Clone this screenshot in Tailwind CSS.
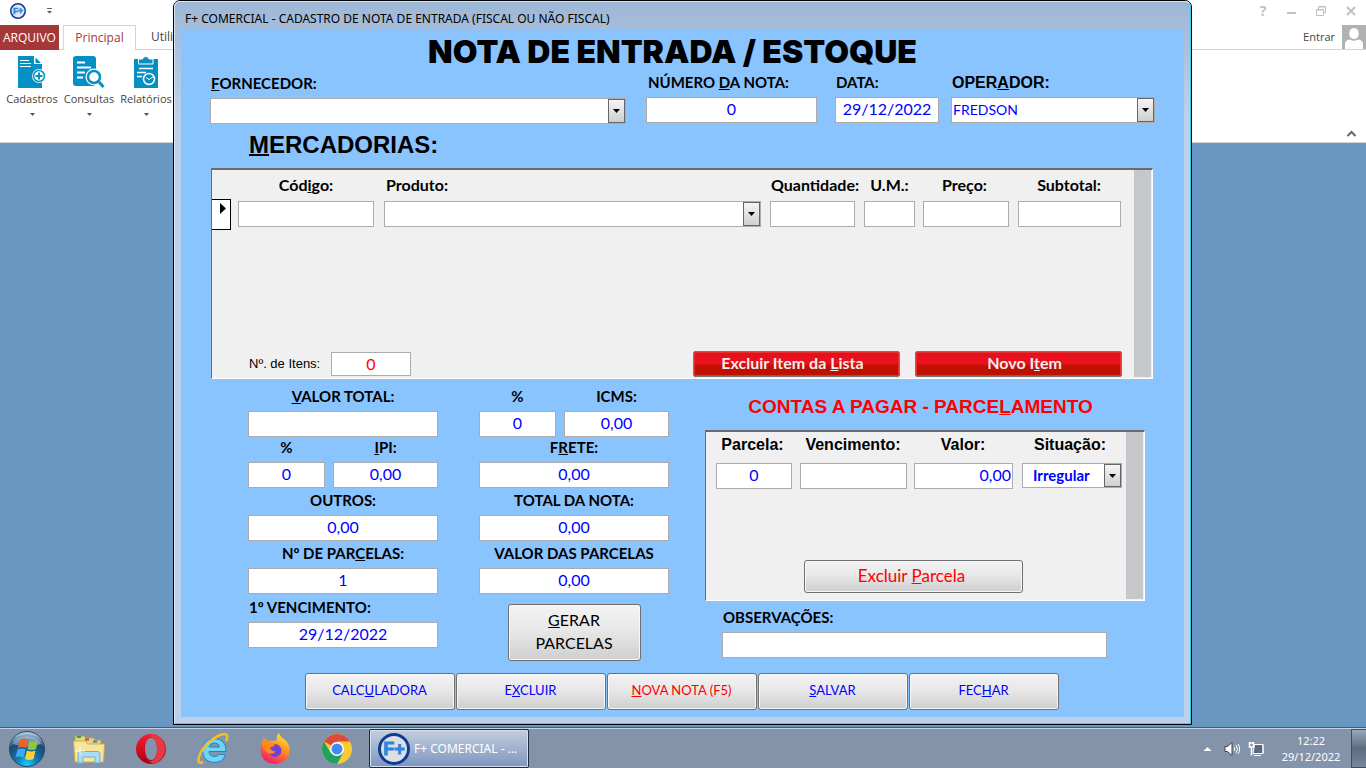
<!DOCTYPE html>
<html lang="pt-BR">
<head>
<meta charset="utf-8">
<title>F+ Comercial</title>
<script src="https://cdn.jsdelivr.net/npm/@tailwindcss/browser@4"></script>
</head>
<body class="relative flex h-screen flex-col overflow-hidden bg-[#6897c2] font-['Open_Sans',sans-serif] text-[12px] text-[#444]">

<!-- Ribbon -->
<header class="h-[143px] shrink-0 border-b border-[#d4d4d4] bg-white">
  <div class="flex h-[25px] items-center justify-between pl-[10px] pr-[10px] pb-[3px]">
    <div class="flex items-center gap-5">
      <svg class="size-4" viewBox="0 0 32 32"><circle cx="16" cy="16" r="14.500" fill="#dde6f2" stroke="#0d3c94" stroke-width="3"/><text x="16" y="22" text-anchor="middle" font-family="Liberation Sans" font-weight="bold" font-size="17" fill="#2f86dd" stroke="#2f86dd">F+</text></svg>
      <svg class="h-2 w-[7px]" viewBox="0 0 7 8"><path d="M1 1.500h5" stroke="#666"/><path d="M1 4h5L3.500 6.500z" fill="#555"/></svg>
    </div>
    <div class="flex items-center gap-[20px] text-[#c0c1c6]">
      <button class="h-5 w-2 text-[14px] leading-5 font-bold" aria-label="Ajuda">?</button>
      <button aria-label="Minimizar"><svg class="h-3 w-[9px]" viewBox="0 0 9 12"><path d="M0 8h9" stroke="currentColor" stroke-width="2"/></svg></button>
      <button aria-label="Restaurar"><svg class="h-3 w-[10px]" viewBox="0 0 10 12" fill="none" stroke="currentColor"><path d="M2.500 4V1.500h7v6H7.500M2 2h8M.5 4.500h7v6h-7zM0 5h8"/></svg></button>
      <button aria-label="Fechar"><svg class="h-3 w-[10px]" viewBox="0 0 10 12"><path d="M1 2l8 8M9 2l-8 8" stroke="currentColor" stroke-width="2"/></svg></button>
    </div>
  </div>
  <div class="flex h-[25px] items-end">
    <button class="h-full w-[59px] bg-[#a4373a] text-white">ARQUIVO</button>
    <span class="w-1 border-b border-[#d4d4d4]"></span>
    <button class="h-full w-[73px] border border-b-0 border-[#d4d4d4] text-[#a4373a]">Principal</button>
    <div class="flex h-full flex-1 items-center justify-between border-b border-[#d4d4d4] pl-[15px]">
      <button>Utilitários</button>
      <div class="flex items-center gap-[7px]"><a href="#" class="text-[11px]">Entrar</a>
      <svg class="h-6 w-6" viewBox="0 0 24 24"><path fill="#b1b1b1" d="M0 0h24v24H0z"/><ellipse cx="12" cy="8.500" rx="4.800" ry="5.500" fill="#fff"/><path d="M3 24v-5q0-4 5-4.500 4 2.500 8 0 5 .5 5 4.500v5z" fill="#fff"/></svg></div>
    </div>
  </div>
  <div class="flex h-[92px] justify-between pl-1 pr-[10px]">
    <div class="flex gap-px text-[11px]">
      <button class="flex w-14 flex-col items-center pt-[6px]">
        <svg class="h-8 w-[28px]" viewBox="0 0 28 32"><path d="M0 0h16v8h8v24H0z" fill="#0490c4"/><path d="M17.500 1.500L23 7h-5.500z" fill="#0490c4"/><path d="M2 4.500h9M2 7.500h11M2 10.500h11" stroke="#fff"/><circle cx="21" cy="20" r="7" fill="#fff"/><circle cx="21" cy="20" r="5.500" fill="#fff" stroke="#0490c4" stroke-width="1.500"/><path d="M17.500 20h7M21 16.500v7" stroke="#0490c4" stroke-width="2"/></svg>
        <span class="mt-[2px] leading-[18px]">Cadastros</span>
        <svg class="mt-[5px] h-[3px] w-[5px]" viewBox="0 0 5 3"><path d="M0 0h5L2.500 3z" fill="#555"/></svg>
      </button>
      <button class="flex w-14 flex-col items-center pt-[6px]">
        <svg class="h-8 w-8" viewBox="0 0 32 32"><rect width="23" height="30" rx="3" fill="#0490c4"/><path d="M4 6.500h8M4 11.500h14M4 16.500h8M4 21.500h6" stroke="#fff" stroke-width="2"/><circle cx="21" cy="21" r="8.500" fill="#fff"/><circle cx="21" cy="21" r="6" fill="#fff" stroke="#0490c4" stroke-width="2.500"/><path d="M26 26l4.500 5" stroke="#0490c4" stroke-width="3"/></svg>
        <span class="mt-[2px] leading-[18px]">Consultas</span>
        <svg class="mt-[5px] h-[3px] w-[5px]" viewBox="0 0 5 3"><path d="M0 0h5L2.500 3z" fill="#555"/></svg>
      </button>
      <button class="flex w-14 flex-col items-center pt-[6px]">
        <svg class="h-8 w-6" viewBox="0 0 24 32"><path d="M0 3h24v29H0z" fill="#0490c4"/><path d="M4.500 3v5h14.500V3h-4a3.300 3 0 0 0-6.500 0z" fill="#0490c4" stroke="#fff"/><path d="M5 12.500h14M3 16.500h9M3 20.500h5" stroke="#fff" stroke-width="1.500"/><circle cx="15" cy="23" r="5.500" fill="#0490c4" stroke="#fff" stroke-width="1.500"/><path d="M12 21.500l3 2 4-2.500" fill="none" stroke="#fff"/></svg>
        <span class="mt-[2px] leading-[18px]">Relatórios</span>
        <svg class="mt-[5px] h-[3px] w-[5px]" viewBox="0 0 5 3"><path d="M0 0h5L2.500 3z" fill="#555"/></svg>
      </button>
    </div>
    <button class="self-end pb-[5px]" aria-label="Recolher a faixa de opções"><svg class="h-[7px] w-[9px]" viewBox="0 0 9 7"><path d="M.5 6l4-4 4 4" fill="none" stroke="#666" stroke-width="2"/></svg></button>
  </div>
</header>

<!-- Application window -->
<main class="absolute top-0 right-[174px] left-[173px] rounded-t-[7px] border border-black bg-[#bdd0e9] font-['Lato','Noto_Sans',sans-serif] text-black">
  <div class="rounded-t-[6px] border border-[#d8e6f5] border-r-[#35d0ee] border-b-[#35d0ee] bg-linear-to-b from-[#9db7d6] to-[#bdd0e9] to-[110px] px-[6px] pb-[6px]">
    <h1 class="flex h-7 items-center pl-[4px] pt-[5px] font-['Noto_Sans',sans-serif] text-[12px] leading-4">F+ COMERCIAL - CADASTRO DE NOTA DE ENTRADA (FISCAL OU NÃO FISCAL)</h1>
    <form class="flex flex-col bg-[#8ac4ff] px-[29px] pb-[7px]" onsubmit="return false">
      <h2 class="h-[42px] pr-5 text-center font-['Inter',sans-serif] text-[32px] leading-[43px] font-black">NOTA DE ENTRADA / ESTOQUE</h2>

      <div class="flex items-end text-[15px]">
        <div class="flex-1 font-bold"><label for="forn" class="block pl-px leading-5"><u>F</u>ORNECEDOR:</label>
          <div class="relative mt-[5px] h-[26px]"><select id="forn" class="h-full w-full appearance-none border border-[#ababab] bg-white px-1"><option></option></select>
          <span class="pointer-events-none absolute inset-y-px right-px flex w-[17px] items-center justify-center border border-[#666] bg-linear-to-b from-[#f5f5f5] to-[#cfcfcf]"><svg class="h-1 w-[7px]" viewBox="0 0 7 4"><path d="M0 0h7L3.500 4z"/></svg></span></div></div>
        <div class="mb-px ml-5 w-[171px] font-bold"><label for="num" class="block pl-[2px] leading-5">NÚMERO <u>D</u>A NOTA:</label>
          <input id="num" value="0" class="mt-[5px] block h-[26px] w-full border border-[#ababab] bg-white pb-1 text-center text-[16px] font-normal text-[#00f]"></div>
        <div class="mb-px ml-[18px] w-[104px] font-bold"><label for="data" class="block pl-px leading-5">DATA:</label>
          <input id="data" value="29/12/2022" class="mt-[5px] block h-[26px] w-full border border-[#ababab] bg-white pb-1 text-center text-[16px] font-normal text-[#00f]"></div>
        <div class="mb-px ml-3 w-[204px]"><label for="oper" class="block pl-px font-['Liberation_Sans',sans-serif] text-[16px] leading-5 font-bold">OPER<u>A</u>DOR:</label>
          <div class="relative mt-1 h-[26px]"><select id="oper" class="h-full w-full appearance-none border border-[#ababab] bg-white pb-[2px] pl-px text-[14px] text-[#00f]"><option>FREDSON</option></select>
          <span class="pointer-events-none absolute inset-y-px right-px flex w-[17px] items-center justify-center border border-[#666] bg-linear-to-b from-[#f5f5f5] to-[#cfcfcf]"><svg class="h-1 w-[7px]" viewBox="0 0 7 4"><path d="M0 0h7L3.500 4z"/></svg></span></div></div>
      </div>

      <h3 class="h-11 pl-[39px] font-['Liberation_Sans',sans-serif] text-[24px] leading-[42px] font-bold"><u class="decoration-2">M</u>ERCADORIAS:</h3>

      <!-- Items list -->
      <section class="mr-[2px] ml-px flex h-[211px] border border-t-2 border-t-[#6b6b6b] border-r-white border-b-white border-l-[#6b6b6b] bg-[#f0f0f0]">
        <div class="flex min-w-0 flex-1 flex-col justify-between">
          <table class="w-full table-fixed text-[16px]">
            <colgroup><col class="w-[26px]"><col class="w-[146px]"><col><col class="w-[94px]"><col class="w-[59px]"><col class="w-[95px]"><col class="w-[116px]"></colgroup>
            <thead><tr class="h-7 font-bold"><td></td><th class="pt-[2px] pr-[10px]"><label for="cod">Cód<u>i</u>go:</label></th><th class="pt-[2px] pl-[2px] text-left"><label for="prod">Produto:</label></th><th class="pt-[2px] pr-1 whitespace-nowrap"><label for="qtd">Quantidade:</label></th><th class="pt-[2px] pr-2"><label for="um">U.M.:</label></th><th class="pt-[2px] pr-3"><label for="preco">Preço:</label></th><th class="pt-[2px] pr-[14px]"><label for="sub">Subtotal:</label></th></tr></thead>
            <tbody><tr class="h-8">
              <td><div class="flex h-[31px] w-[19px] justify-end border border-l-0 border-black bg-white pt-[3px] pr-1"><svg class="h-[11px] w-[6px]" viewBox="0 0 6 11"><path d="M0 0v11l6-5.500z"/></svg></div></td>
              <td class="pr-[10px]"><input id="cod" class="block h-[26px] w-full border border-[#ababb0] bg-white"></td>
              <td class="pr-[9px]"><div class="relative h-[26px]"><select id="prod" class="h-full w-full appearance-none border border-[#ababb0] bg-white px-1"><option></option></select><span class="pointer-events-none absolute inset-y-px right-px flex w-[17px] items-center justify-center border border-[#666] bg-linear-to-b from-[#f5f5f5] to-[#cfcfcf]"><svg class="h-1 w-[7px]" viewBox="0 0 7 4"><path d="M0 0h7L3.500 4z"/></svg></span></div></td>
              <td class="pr-[9px]"><input id="qtd" class="block h-[26px] w-full border border-[#ababb0] bg-white"></td>
              <td class="pr-2"><input id="um" class="block h-[26px] w-full border border-[#ababb0] bg-white"></td>
              <td class="pr-[9px]"><input id="preco" class="block h-[26px] w-full border border-[#ababb0] bg-white"></td>
              <td class="pr-[13px]"><input id="sub" class="block h-[26px] w-full border border-[#ababb0] bg-white"></td>
            </tr></tbody>
          </table>
          <div class="flex items-center pr-3 pb-px pl-[37px]">
            <label for="itens" class="w-[82px] font-['Liberation_Sans',sans-serif] text-[13px]">Nº. de Itens:</label>
            <input id="itens" value="0" class="h-[24px] w-20 border border-[#ababb0] bg-white text-center text-[16px] text-[#f00]">
            <button class="ml-auto h-[26px] w-[207px] rounded-[2px] border border-[#777] bg-linear-to-b from-[#e0101c] from-0% via-[#f01020] via-45% to-[#c01000] to-60% pr-2 pb-[2px] text-[16px] leading-5 font-bold text-[#eee] inset-ring inset-ring-[#e83030]">Excluir Item da <u>L</u>ista</button>
            <button class="ml-[15px] h-[26px] w-[207px] rounded-[2px] border border-[#777] bg-linear-to-b from-[#e0101c] from-0% via-[#f01020] via-45% to-[#c01000] to-60% pl-3 pb-[2px] text-[16px] leading-5 font-bold text-[#eee] inset-ring inset-ring-[#e83030]">Novo I<u>t</u>em</button>
          </div>
        </div>
        <div class="mr-px mb-px w-[17px] bg-[#c6c7ca]"></div>
      </section>

      <div class="mt-[7px] flex pl-[38px] pr-[10px]">
        <!-- Totals -->
        <div class="grid grid-cols-[190px_190px] grid-rows-[51px_51px_53px_53px_67px] gap-x-[41px] text-center text-[15px] font-bold [&_input]:block [&_input]:h-[26px] [&_input]:w-full [&_input]:border [&_input]:border-[#ababab] [&_input]:bg-white [&_input]:pb-1 [&_input]:text-center [&_input]:text-[16px] [&_input]:font-normal [&_input]:text-[#00f] [&_label]:mb-[5px] [&_label]:block [&_label]:leading-5">
          <div class="self-end"><label for="vt"><u>V</u>ALOR TOTAL:</label><input id="vt"></div>
          <div class="flex gap-2 self-end"><div class="w-[77px]"><label for="picms">%</label><input id="picms" value="0"></div><div class="flex-1"><label for="icms">ICMS:</label><input id="icms" value="0,00"></div></div>
          <div class="flex gap-2 self-end"><div class="w-[77px]"><label for="pipi">%</label><input id="pipi" value="0"></div><div class="flex-1"><label for="ipi"><u>I</u>PI:</label><input id="ipi" value="0,00"></div></div>
          <div class="self-end"><label for="frete">F<u>R</u>ETE:</label><input id="frete" value="0,00"></div>
          <div class="self-end"><label for="outros">OUTROS:</label><input id="outros" value="0,00"></div>
          <div class="self-end"><label for="tn">TOTAL DA NOTA:</label><input id="tn" value="0,00"></div>
          <div class="self-end"><label for="np">Nº DE PAR<u>C</u>ELAS:</label><input id="np" value="1"></div>
          <div class="self-end"><label for="vp">VALOR DAS PARCELAS</label><input id="vp" value="0,00"></div>
          <div class="pt-[3px]"><label for="venc1" class="pl-px text-left">1º VENCIMENTO:</label><input id="venc1" value="29/12/2022"></div>
          <button class="mx-auto h-[57px] w-[133px] self-end rounded-[3px] border border-[#707070] bg-linear-to-b from-[#f3f3f3] from-0% via-[#e8e8e8] via-45% to-[#cfcfcf] pb-1 text-[16px] leading-[23px] font-normal inset-ring inset-ring-[#f8f8f8]"><u>G</u>ERAR<br>PARCELAS</button>
        </div>

        <!-- Instalments -->
        <div class="ml-9 flex flex-1 flex-col">
          <h3 class="mb-[2px] pr-[9px] text-center font-['Liberation_Sans',sans-serif] text-[19px] leading-[42px] font-bold text-[#f00]">CONTAS A PAGAR - PARCE<u>L</u>AMENTO</h3>
          <section class="flex h-[171px] border border-t-2 border-t-[#6b6b6b] border-r-white border-b-white border-l-[#6b6b6b] bg-[#f0f0f0]">
            <div class="flex min-w-0 flex-1 flex-col justify-between">
              <table class="ml-[10px] table-fixed font-['Liberation_Sans',sans-serif] text-[16px]">
                <colgroup><col class="w-[84px]"><col class="w-[114px]"><col class="w-[108px]"><col class="w-[104px]"></colgroup>
                <thead><tr class="h-[31px] align-top leading-[26px]"><th class="pr-[11px]"><label for="parc">Parcela:</label></th><th class="pr-2"><label for="venc">Vencimento:</label></th><th class="pr-[10px]"><label for="val">Valor:</label></th><th class="pr-2"><label for="sit">Situação:</label></th></tr></thead>
                <tbody class="font-['Lato',sans-serif] text-[#00f]"><tr class="align-top">
                  <td class="pr-2"><input id="parc" value="0" class="block h-[26px] w-full border border-[#ababb0] bg-white pb-1 text-center"></td>
                  <td class="pr-[7px]"><input id="venc" class="block h-[26px] w-full border border-[#ababb0] bg-white"></td>
                  <td class="pr-[9px]"><input id="val" value="0,00" class="block h-[26px] w-full border border-[#ababb0] bg-white pr-px pb-1 text-right"></td>
                  <td class="pr-1"><div class="relative h-[25px]"><select id="sit" class="h-full w-full appearance-none border border-[#ababb0] bg-white pb-px pl-[10px] text-[15px] leading-5 font-bold"><option>Irregular</option></select><span class="pointer-events-none absolute inset-y-px right-px flex w-[17px] items-center justify-center border border-[#666] bg-linear-to-b from-[#f5f5f5] to-[#cfcfcf]"><svg class="h-1 w-[7px]" viewBox="0 0 7 4"><path d="M0 0h7L3.500 4z"/></svg></span></div></td>
                </tr></tbody>
              </table>
              <button class="mb-[7px] ml-[98px] h-[33px] w-[219px] rounded-[3px] border border-[#707070] bg-linear-to-b from-[#f3f3f3] from-0% via-[#e8e8e8] via-45% to-[#cfcfcf] pr-1 pb-[2px] text-[17px] text-[#f00] inset-ring inset-ring-[#f8f8f8]">Excluir <u>P</u>arcela</button>
            </div>
            <div class="mr-px mb-px w-[17px] bg-[#c6c7ca]"></div>
          </section>
          <label for="obs" class="mt-[6px] pl-[18px] text-[15px] leading-5 font-bold">OBSERVAÇÕES:</label>
          <input id="obs" class="mt-[5px] mr-[38px] ml-[17px] h-[26px] border border-[#ababab] bg-white px-1 text-[16px]">
        </div>
      </div>

      <div class="mt-3 mr-[2px] flex justify-center gap-px text-[13px] text-[#00f] [&_button]:h-[37px] [&_button]:w-[150px] [&_button]:rounded-[3px] [&_button]:border [&_button]:border-[#707070] [&_button]:bg-linear-to-b [&_button]:from-[#f3f3f3] [&_button]:via-[#e6e6e6] [&_button]:to-[#cfcfcf] [&_button]:pb-[2px] [&_button]:inset-ring [&_button]:inset-ring-[#f8f8f8]">
        <button>CALC<u>U</u>LADORA</button><button>E<u>X</u>CLUIR</button><button class="text-[#f00]"><u>N</u>OVA NOTA (F5)</button><button><u>S</u>ALVAR</button><button>FEC<u>H</u>AR</button>
      </div>
    </form>
  </div>
</main>

<!-- Taskbar -->
<footer class="mt-auto flex h-10 shrink-0 items-center border-t border-[#c3d4e8] bg-[#8394aa] pl-[9px] text-white shadow-[0_-1px_0_#4b5b70]">
  <button aria-label="Iniciar"><svg class="size-9" viewBox="0 0 36 36"><defs><radialGradient id="orb" cx=".5" cy=".95" r=".9"><stop offset="0" stop-color="#18d0ff"/><stop offset=".4" stop-color="#1070a8"/><stop offset=".75" stop-color="#1c4a74"/><stop offset="1" stop-color="#a8c8e0"/></radialGradient></defs><circle cx="18" cy="18" r="17.500" fill="url(#orb)" stroke="#2b4460"/><path d="M4 13a15 12 0 0 1 28 0q-14 5-28 0z" fill="#fff" opacity=".35"/><path d="M11 8.500q4-2 8 0l-2 8.500q-4-2-8 0z" fill="#f0602a"/><path d="M20.500 9.500q4 2 8.500 0l-2 8.500q-4 2-8.500 0z" fill="#8dc63f"/><path d="M8.500 18.500q4-2 8 0l-2 8q-4-2-8 0z" fill="#3fa9f5"/><path d="M18 19.500q4 2 8.500 0l-2 8.500q-4 2-8.500 0z" fill="#ffd23c"/></svg></button>
  <button class="ml-[27px]" aria-label="Explorador"><svg class="h-[30px] w-[34px]" viewBox="0 0 34 30"><path d="M3 2h9l2 2h8l1 2h6v6H3z" fill="#e8d28a" stroke="#b89c4c"/><path d="M5 3h4" stroke="#2fa83c" stroke-width="2"/><path d="M13 5.500h4" stroke="#d8402c" stroke-width="2"/><path d="M21 7.500h4" stroke="#2b84d0" stroke-width="2"/><path d="M1.500 7h12l2 3h17l-1 18H3z" fill="#f8e59c" stroke="#c9ad58"/><path d="M6 29v-9q0-2.500 2.500-2.500h17q2.500 0 2.500 2.500v9h-5v-6H11v6z" fill="#a9dcf2" stroke="#6db0d4"/><path d="M8 12v10M3 17h10" stroke="#fff" stroke-width=".8"/></svg></button>
  <button class="ml-[29px]" aria-label="Opera"><svg class="size-8" viewBox="0 0 32 32"><defs><linearGradient id="op" x2="0" y2="1"><stop stop-color="#ff1b2d"/><stop offset="1" stop-color="#a70014"/></linearGradient></defs><path fill-rule="evenodd" fill="url(#op)" d="M16 1a15 15 0 1 0 0 30 15 15 0 0 0 0-30zm0 4c4 0 6 5 6 11s-2 11-6 11-6-5-6-11 2-11 6-11z"/><path d="M19 1.500A15 15 0 0 1 19 30.500c-2 0-4-1-5-3 5 2 8-4 8-11.500S19 3 14 4q2-2.500 5-2.500z" fill="#e33a44"/></svg></button>
  <button class="ml-[30px]" aria-label="Internet Explorer"><svg class="size-8" viewBox="0 0 32 32"><path d="M29 18.500H12q.5 5 5.500 5 3 0 4.500-2h6.500q-2.500 8-11.500 8Q6 29 5.500 17.500 6 6 17 5.500 29.500 6 29 18.500zM12 14h10.500q-.5-4-5-4t-5.500 4z" fill="#6fd4f8" stroke="#1c86c8"/><path d="M6 29Q0 32 2 24 5 14 16 6 28-2 30 2.500q.5 3-1 5.500" fill="none" stroke="#f6bd27" stroke-width="2.600"/></svg></button>
  <button class="ml-[30px]" aria-label="Firefox"><svg class="size-8" viewBox="0 0 32 32"><defs><linearGradient id="ff" x1=".8" x2=".3" y2="1"><stop stop-color="#fff04a"/><stop offset=".4" stop-color="#ff9a20"/><stop offset="1" stop-color="#f5156c"/></linearGradient></defs><path d="M20 0q1 4 5 6 6 5 5.500 12-1 12-14.500 13Q2 30 1.500 17 1.500 11 4 8V4l4 3.500L14 8l4-1q-1-4 2-7z" fill="url(#ff)"/><circle cx="16" cy="17.500" r="6.500" fill="#7540d8"/><path d="M3 9l5-1 8 3q-1 3-5 3.500 1 4 6 4-4 4-9 1-5-4-5-10.500z" fill="#ff8a16"/></svg></button>
  <button class="ml-[30px]" aria-label="Chrome"><svg class="size-8" viewBox="0 0 32 32"><circle cx="16" cy="16" r="15" fill="#fbc934"/><path d="M16 16L3 8.500A15 15 0 0 1 29 8.500H16z" fill="#dd4b3e"/><path d="M3 8.500A15 15 0 0 0 16 31l6.500-11.500L16 16 9.500 19.700z" fill="#1da25f"/><circle cx="16" cy="16" r="7" fill="#fff"/><circle cx="16" cy="16" r="5.500" fill="#4688f1"/></svg></button>
  <button class="ml-4 flex h-[39px] w-[160px] items-center gap-1 rounded-[2px] border border-[#222b3a] bg-linear-to-b from-[#c3cedf] via-[#a0b2ce] to-[#7f95c0] pl-[8px] font-['Noto_Sans',sans-serif] text-[12px] whitespace-nowrap inset-ring inset-ring-[#d5dfee]">
    <svg class="size-8 shrink-0" viewBox="0 0 32 32"><circle cx="16" cy="16" r="14.500" fill="#dedfe3" stroke="#0d3c94" stroke-width="3"/><text x="16" y="22" text-anchor="middle" font-family="Liberation Sans" font-weight="bold" font-size="18" fill="#2f86dd" stroke="#2f86dd">F+</text></svg>
    F+ COMERCIAL - ...</button>
  <div class="ml-auto flex h-full items-center">
    <button aria-label="Mostrar ícones ocultos"><svg class="h-1 w-[9px]" viewBox="0 0 9 4"><path d="M.5 4L4.500 0l4 4z" fill="#fff"/></svg></button>
    <svg class="ml-3 h-4 w-4" viewBox="0 0 16 16"><path d="M1 5.500h2.500L8 1.500v13l-4.500-4H1z" fill="#fff" stroke="#444"/><path d="M10 6q1.500 2 0 4M12 4q3 4 0 8M14 3q3.500 5 0 10" fill="none" stroke="#fff"/></svg>
    <svg class="ml-2 h-4 w-4" viewBox="0 0 16 16" fill="none" stroke="#fff"><path d="M6.500 3.500h8.500v9H5z" fill="#5a6a7e"/><path d="M6.500 3.500h8.500v9H5M6 14.500h7"/><path d="M1.500 1v5h4V1M3.500 6v8.500M2.500 1v2M4.500 1v2" stroke-width="1.500"/></svg>
    <div class="ml-[17px] w-[60px] text-center font-['Noto_Sans',sans-serif] text-[11px] leading-4">12:22<br>29/12/2022</div>
    <button class="ml-[10px] h-full w-[15px] border border-r-0 border-[#3f4d60] bg-linear-to-b from-[#9aa8b8] via-[#5c6d80] to-[#76879b]" aria-label="Mostrar área de trabalho"></button>
  </div>
</footer>
</body>
</html>
